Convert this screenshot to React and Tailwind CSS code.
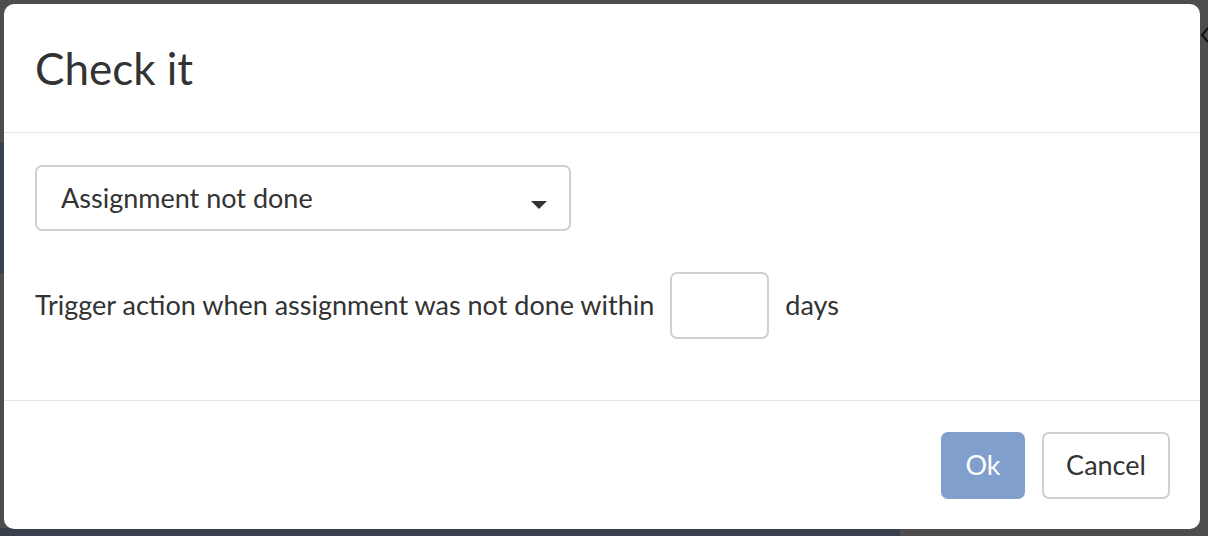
export default function App() {
  const font = { fontFamily: "Lato, 'Open Sans', sans-serif" };
  return (
    <div className="relative w-[1208px] h-[536px] overflow-hidden bg-[#4d4d4d]" style={font}>
      <div className="absolute left-0 top-[143px] w-[6px] h-[130px] bg-[#38404b]" />
      <div className="absolute left-0 bottom-0 w-[900px] h-[8px] bg-[#38404b]" />
      <svg className="absolute right-0 top-[26px]" width="8" height="18" viewBox="0 0 8 18">
        <path d="M8 2 L2 9 L8 16" stroke="#111" strokeWidth="2" fill="none" />
      </svg>
      <div className="relative ml-[4px] mt-[4px] w-[1196px] h-[525px] bg-white rounded-[10px] flex flex-col text-[#333]">
        <div className="h-[129px] flex items-center px-[31px] border-b border-[#e5e5e5]">
          <h1 className="text-[44px] leading-none">Check it</h1>
        </div>
        <div className="h-[268px] border-b border-[#e5e5e5] px-[31px] pt-[32px]">
          <div className="w-[536px] h-[66px] border-2 border-[#d0d0d0] rounded-[7px] flex items-center justify-between pl-[24px] pr-[22px]">
            <span className="text-[27px]">Assignment not done</span>
            <svg width="16" height="8" viewBox="0 0 16 8" className="mt-[14px]"><path d="M0 0h16L8 8z" fill="#333" /></svg>
          </div>
          <div className="flex items-center mt-[41px] text-[27px]">
            <span>Trigger action when assignment was not done within</span>
            <div className="w-[99px] h-[67px] border-2 border-[#d0d0d0] rounded-[7px] ml-[16px] mr-[16px]" />
            <span>days</span>
          </div>
        </div>
        <div className="flex-1 flex items-center justify-end gap-[17px] pr-[30px] pt-[1px]">
          <button className="w-[84px] h-[67px] rounded-[7px] bg-[#819fcc] text-white text-[27px]">Ok</button>
          <button className="w-[128px] h-[67px] rounded-[7px] border-2 border-[#d0d0d0] bg-white text-[#333] text-[27px]">Cancel</button>
        </div>
      </div>
    </div>
  );
}
